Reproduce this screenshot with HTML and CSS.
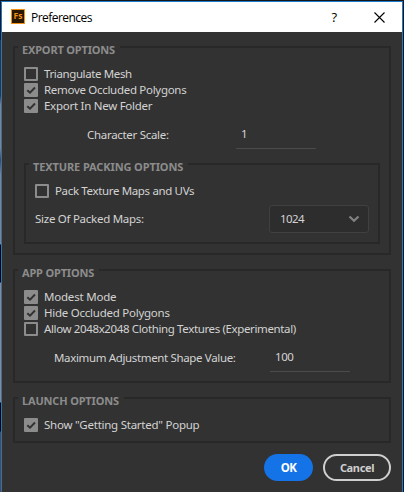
FILE: index.html
```html
<!DOCTYPE html>
<html lang="en">
<head>
<meta charset="utf-8">
<title>Preferences</title>
<link rel="stylesheet" href="styles.css">
</head>
<body>
<main class="window">
  <header class="titlebar">
    <span class="logo">Fs</span>
    <h1>Preferences</h1>
    <span class="help">?</span>
    <svg class="close" width="11" height="11" viewBox="0 0 11 11"><path d="M.5 .5L10.5 10.5M10.5 .5L.5 10.5" stroke="#000" stroke-width="1.1" fill="none"/></svg>
  </header>
  <div class="body">
    <section class="group export">
      <h2>EXPORT OPTIONS</h2>
      <div class="check"><i class="box"></i><span class="t-mesh">Triangulate Mesh</span></div>
      <div class="check"><i class="box on"><svg viewBox="0 0 14 14"><path d="M3.3 7.2L6 9.7L11 4.5"/></svg></i><span class="t-remove">Remove Occluded Polygons</span></div>
      <div class="check"><i class="box on"><svg viewBox="0 0 14 14"><path d="M3.3 7.2L6 9.7L11 4.5"/></svg></i><span class="t-folder">Export In New Folder</span></div>
      <div class="field scale"><span class="t-scale">Character Scale:</span><span class="input">1</span></div>
      <section class="group packing">
        <h2>TEXTURE PACKING OPTIONS</h2>
        <div class="check"><i class="box"></i><span class="t-pack">Pack Texture Maps and UVs</span></div>
        <div class="size"><span class="t-size">Size Of Packed Maps:</span><span class="select"><span>1024</span><svg width="12" height="8" viewBox="0 0 12 8"><path d="M1.5 1.5L6 5.8L10.5 1.5" fill="none" stroke="#828282" stroke-width="2.2"/></svg></span></div>
      </section>
    </section>
    <section class="group app">
      <h2>APP OPTIONS</h2>
      <div class="check"><i class="box on"><svg viewBox="0 0 14 14"><path d="M3.3 7.2L6 9.7L11 4.5"/></svg></i><span class="t-modest">Modest Mode</span></div>
      <div class="check"><i class="box on"><svg viewBox="0 0 14 14"><path d="M3.3 7.2L6 9.7L11 4.5"/></svg></i><span class="t-hide">Hide Occluded Polygons</span></div>
      <div class="check"><i class="box"></i><span class="t-allow">Allow 2048x2048 Clothing Textures (Experimental)</span></div>
      <div class="field shape"><span class="t-shape">Maximum Adjustment Shape Value:</span><span class="input">100</span></div>
    </section>
    <section class="group launch">
      <h2>LAUNCH OPTIONS</h2>
      <div class="check"><i class="box on"><svg viewBox="0 0 14 14"><path d="M3.3 7.2L6 9.7L11 4.5"/></svg></i><span class="t-show">Show "Getting Started" Popup</span></div>
    </section>
    <footer><button class="ok">OK</button><button class="cancel">Cancel</button></footer>
  </div>
</main>
</body>
</html>
```
FILE: styles.css
```css
* { box-sizing: border-box; }
body {
  margin: 0;
  height: 492px;
  overflow: hidden;
  padding: 1px 1px 0;
  font: 11.5px/16px "Noto Sans", "Open Sans", sans-serif;
  color: #d2d2d2;
  background: linear-gradient(90deg, transparent 1px, #16161d 1px),
    linear-gradient(#17171e 0 40px, #39302f 40px 95px, #a77965 105px 148px, #5b4038 160px, #a77965 175px 244px, #000 245px 282px, #b07e67 283px 402px, #000 403px 431px, #60453d 432px 492px);
}
.window {
  height: 491px;
  border: 1px solid #1e78c8;
  border-bottom: 0;
  background: #323232;
}
.titlebar {
  height: 30px;
  background: #fff;
  color: #000;
  display: flex;
  align-items: center;
  padding-left: 9px;
}
.logo {
  width: 14px;
  height: 15px;
  border: 1px solid #f29018;
  background: #2a1700;
  color: #f29018;
  font: bold 8.5px/11px "Open Sans", sans-serif;
  text-align: center;
  margin-top: -1px;
}
h1 {
  margin: 2px 0 0 6px;
  font: 12px/16px "Open Sans", sans-serif;
  letter-spacing: -.55px;
  flex: 1;
}
.help { font: 13px/16px "Open Sans", sans-serif; margin-right: 37px; margin-top: -1px; }
.close { margin-right: 17px; }
.body { padding: 14px 11px 0; }
.group { border: 2px solid #282828; padding-left: 9px; }
.group h2 {
  width: fit-content;
  height: 14px;
  margin: -5px 0 9px -6px;
  padding: 0 5px 0 4px;
  background: #323232;
  color: #8c8c8c;
  font: bold 11px/14px "Noto Sans", "Open Sans", sans-serif;
  letter-spacing: -.17px;
  white-space: nowrap;
}
.export { height: 209px; }
.check { display: flex; align-items: center; height: 16px; white-space: nowrap; }
.box {
  width: 14px;
  height: 14px;
  border: 2px solid #8c8c8c;
  border-radius: 1px;
  margin-right: 6px;
}
.on { border: 0; background: #8c8c8c; }
.on svg { display: block; fill: none; stroke: #323232; stroke-width: 2; }
.field { display: flex; align-items: flex-start; height: 29px; line-height: 30px; white-space: nowrap; }
.input { width: 80px; height: 29px; padding-left: 5px; line-height: 28px; border-bottom: 1px solid #4b4b4b; letter-spacing: -.4px; }
.scale { margin: 6px 0 0 63px; }
.scale > :first-child { width: 149px; }
.packing { width: 356px; height: 81px; margin-top: 14px; }
.packing h2 { letter-spacing: -.11px; }
.size { display: flex; align-items: center; height: 28px; margin: 6px 9px 0 0; justify-content: space-between; }
.select {
  width: 100px;
  height: 28px;
  border: 1px solid #404040;
  border-radius: 3px;
  background: #2d2d2d;
  padding: 0 8px 0 10px;
  display: flex;
  align-items: center;
  justify-content: space-between;
  letter-spacing: -.6px;
}
.app { height: 114px; margin-top: 14px; }
.shape { margin: 6px 0 0 30px; }
.shape > :first-child { width: 216px; }
.launch { height: 46px; margin-top: 14px; }
.t-mesh { letter-spacing: -.38px; }
.t-remove, .t-scale { letter-spacing: -.3px; }
.t-folder, .t-size { letter-spacing: -.27px; }
.t-pack { letter-spacing: -.35px; }
.t-modest { letter-spacing: -.2px; }
.t-hide, .t-show { letter-spacing: -.25px; }
.t-allow { letter-spacing: -.37px; }
.t-shape { letter-spacing: -.35px; }
footer { display: flex; justify-content: flex-end; gap: 10px; margin-top: 11px; }
button { height: 27px; border: 0; border-radius: 14px; padding: 0; font: bold 11.5px/16px "Noto Sans", sans-serif; }
.ok { width: 49px; background: #1473e6; color: #fff; letter-spacing: -.5px; }
.cancel { width: 68px; background: none; border: 2px solid #cfcfcf; color: #cfcfcf; font-size: 11px; letter-spacing: -.35px; }
```
